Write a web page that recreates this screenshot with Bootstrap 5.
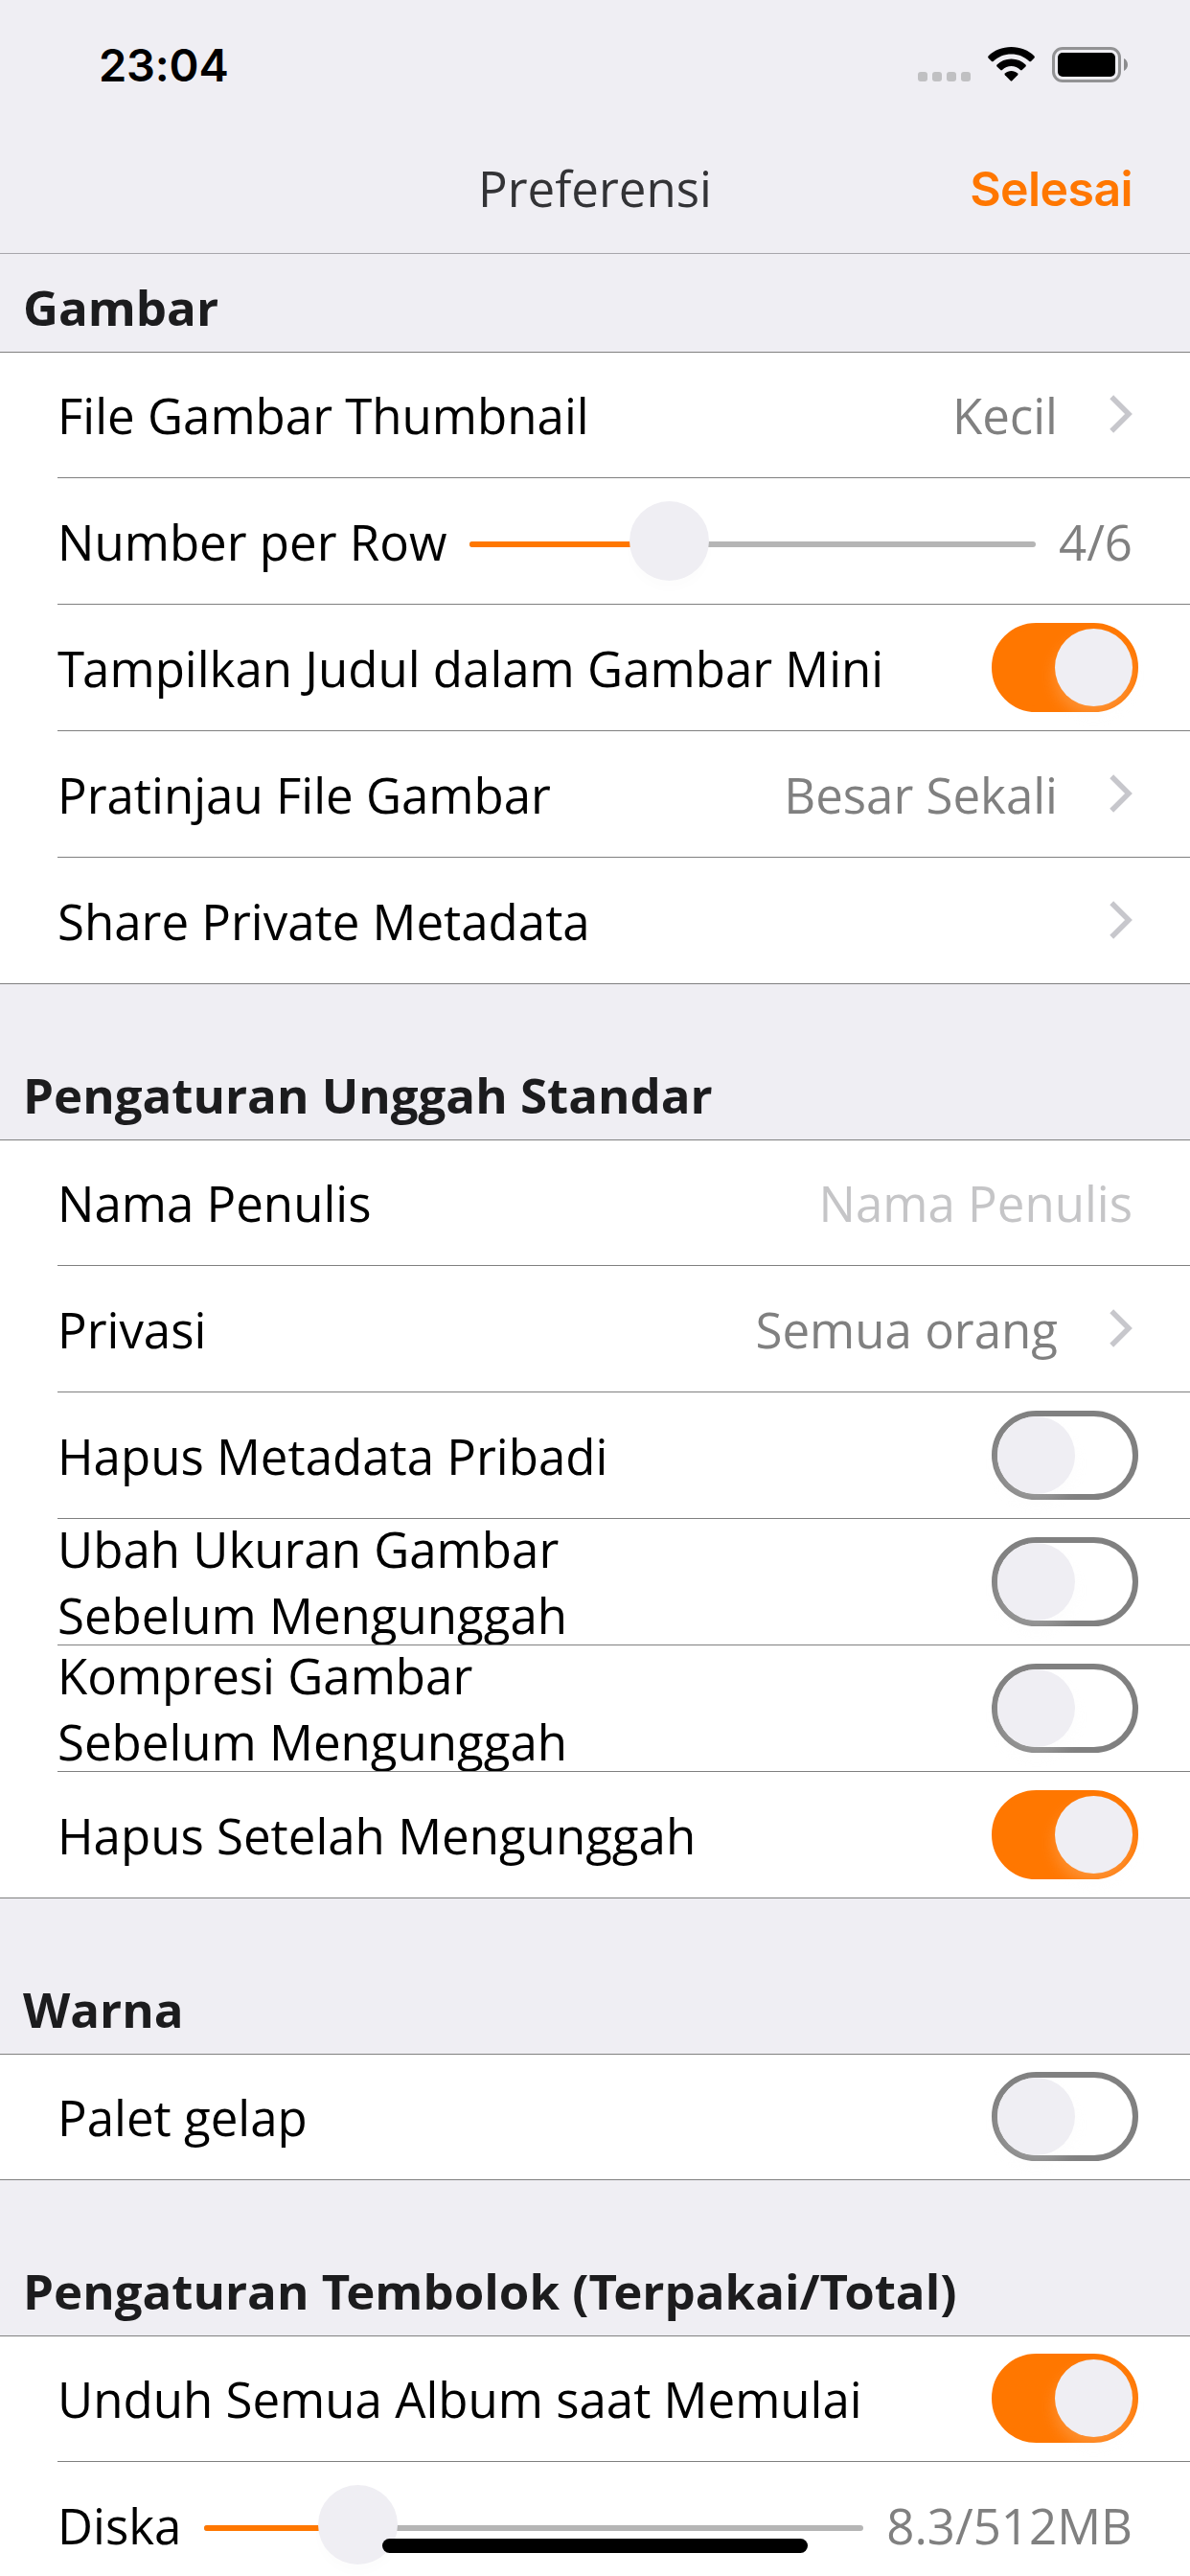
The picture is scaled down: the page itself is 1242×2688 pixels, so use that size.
<!DOCTYPE html>
<html lang="id">
<head>
<meta charset="utf-8">
<meta name="viewport" content="width=device-width, initial-scale=1">
<title>Preferensi</title>
<link href="https://cdn.jsdelivr.net/npm/bootstrap@5.3.0/dist/css/bootstrap.min.css" rel="stylesheet">
<style>
:root{--accent:#ff7700;--panel:#efeef3;--line:#808080}
body{font-family:"Open Sans","Noto Sans",sans-serif;font-size:51px;line-height:69px;color:#000;background:var(--panel)}
.screen{width:1242px;height:2688px;background:var(--panel)}
.ios{font-family:Inter,sans-serif;font-weight:600}
.status{height:132px;padding:0 65px 0 103px}
.clock{font-size:47px;line-height:60px;letter-spacing:-.2px;margin-top:38px}
.status-icons{margin-top:49px}
.top-nav{height:133px;border-bottom:1px solid #a7a6ab;padding:0 60px}
.top-nav>div{height:128px}
.nav-title{color:#333336}
.done{color:var(--accent);font-size:50px;letter-spacing:-.6px}
.section-head{height:164px;padding:0 24px 12px;border-top:1px solid var(--line);border-bottom:1px solid var(--line);color:#1c1c1e;background:var(--panel);font-size:51px;line-height:69px}
.section-head.first-head{height:103px;border-top:0}
.kern{letter-spacing:-4px}
.kern-sm{letter-spacing:-2px}
.rows{background:#fff}
.item{height:132px;margin-left:60px;padding:1px 60px 0 0;border-top:1px solid var(--line)}
.item:first-child{height:130px;border-top:0;padding-top:0}
.item.has-switch{padding-right:54px}
.value{color:#808080}
.hint{color:#c5c5c7}
.chev{margin-left:54px;margin-bottom:3px}
.switch{width:153px;height:93px;margin-bottom:1px;border:6px solid var(--line);border-radius:47px;flex:none}
.switch i{display:block;width:81px;height:81px;border-radius:50%;background:var(--panel);box-shadow:0 9px 16px rgba(245,245,245,.22)}
.switch.on{background:var(--accent);border-color:var(--accent)}
.switch.on i{margin-left:60px}
.slider{height:6px;border-radius:3px;background:#b5b5b5;position:relative;top:3px}
.slider-fill{height:6px;border-radius:3px;background:var(--accent)}
.slider-knob{position:absolute;top:-42px;width:83px;height:83px;border-radius:50%;background:var(--panel);box-shadow:0 9px 12px rgba(0,0,0,.012)}
.home-bar{left:399px;top:2649px;width:444px;height:15px;border-radius:8px;background:#000}
</style>
</head>
<body>
<main class="screen position-relative overflow-hidden d-flex flex-column">
  <div class="status d-flex justify-content-between align-items-start flex-shrink-0">
    <div class="clock ios text-black">23:04</div>
    <svg class="status-icons" width="219" height="37" viewBox="0 0 219 37">
      <g fill="#c0c0c2"><rect x="0" y="26" width="10" height="10" rx="3"/><rect x="15" y="26" width="10" height="10" rx="3"/><rect x="30" y="26" width="10" height="10" rx="3"/><rect x="45" y="26" width="10" height="10" rx="3"/></g>
      <g><path d="M97.500 0C107 0 115.500 3.500 121.500 9.500Q122.300 10.500 121.500 11.400L118 15Q117.200 15.700 116.300 14.900C111 10 104.500 7.500 97.500 7.500S84 10 78.700 14.900Q77.800 15.700 77 15L73.500 11.400Q72.700 10.500 73.500 9.500C79.500 3.500 88 0 97.500 0Z"/><path d="M97.500 12.500C103.500 12.500 108.500 14.800 112.500 18.600Q113.300 19.500 112.500 20.400L108.700 24.100Q108 24.800 107 24C104.300 21.500 101 20.100 97.500 20.100S90.700 21.500 88 24Q87 24.800 86.300 24.100L82.500 20.400Q81.700 19.500 82.500 18.600C86.500 14.800 91.500 12.500 97.500 12.500Z"/><path d="M97.500 25C100 25 102.300 25.900 104.100 27.400Q105 28.300 104.200 29.200L98.300 35.300Q97.500 36.100 96.700 35.300L90.800 29.200Q90 28.300 90.900 27.400C92.700 25.900 95 25 97.500 25Z"/></g>
      <rect x="141.500" y="1.500" width="69" height="34" rx="9.500" fill="none" stroke="#929294" stroke-width="3"/>
      <rect x="146" y="6" width="60" height="25" rx="5"/>
      <path d="M215 12C220.300 14.300 220.300 22.700 215 25Z" fill="#8c8c8e"/>
    </svg>
  </div>
  <header class="top-nav flex-shrink-0">
    <div class="row g-0 align-items-center">
      <div class="col"></div>
      <div class="col-auto nav-title">Preferensi</div>
      <div class="col text-end"><span class="done ios">Selesai</span></div>
    </div>
  </header>

  <h2 class="section-head first-head m-0 fw-bold d-flex align-items-end flex-shrink-0">Gambar</h2>
  <div class="rows d-flex flex-column flex-shrink-0">
    <div class="item d-flex align-items-center"><span class="me-auto">File Gambar Thumbnail</span><span class="value">Kecil</span>
      <svg class="chev" width="24" height="40" viewBox="0 0 24 40" fill="none" stroke="#c7c7cc" stroke-width="5.500"><path d="M2.200 2.200L20 20L2.200 37.800"/></svg></div>
    <div class="item d-flex align-items-center"><span class="text-nowrap">Number per Row</span>
      <div class="slider flex-grow-1 mx-4"><div class="slider-fill" style="width:36%"></div><div class="slider-knob" style="left:167px"></div></div><span class="value">4/6</span></div>
    <div class="item has-switch d-flex align-items-center"><span class="me-auto"><span class="kern-sm">T</span>ampilkan Judul dalam Gambar Mini</span><span class="switch on"><i></i></span></div>
    <div class="item d-flex align-items-center"><span class="me-auto">Pratinjau File Gambar</span><span class="value">Besar Sekali</span>
      <svg class="chev" width="24" height="40" viewBox="0 0 24 40" fill="none" stroke="#c7c7cc" stroke-width="5.500"><path d="M2.200 2.200L20 20L2.200 37.800"/></svg></div>
    <div class="item d-flex align-items-center"><span class="me-auto">Share Private Metadata</span>
      <svg class="chev" width="24" height="40" viewBox="0 0 24 40" fill="none" stroke="#c7c7cc" stroke-width="5.500"><path d="M2.200 2.200L20 20L2.200 37.800"/></svg></div>
  </div>

  <h2 class="section-head m-0 fw-bold d-flex align-items-end flex-shrink-0">Pengaturan Unggah Standar</h2>
  <div class="rows d-flex flex-column flex-shrink-0">
    <div class="item d-flex align-items-center"><span class="me-auto">Nama Penulis</span><span class="hint">Nama Penulis</span></div>
    <div class="item d-flex align-items-center"><span class="me-auto">Privasi</span><span class="value">Semua orang</span>
      <svg class="chev" width="24" height="40" viewBox="0 0 24 40" fill="none" stroke="#c7c7cc" stroke-width="5.500"><path d="M2.200 2.200L20 20L2.200 37.800"/></svg></div>
    <div class="item has-switch d-flex align-items-center"><span class="me-auto">Hapus Metadata Pribadi</span><span class="switch"><i></i></span></div>
    <div class="item has-switch d-flex align-items-center"><span class="me-auto">Ubah Ukuran Gambar<br>Sebelum Mengunggah</span><span class="switch"><i></i></span></div>
    <div class="item has-switch d-flex align-items-center"><span class="me-auto">Kompresi Gambar<br>Sebelum Mengunggah</span><span class="switch"><i></i></span></div>
    <div class="item has-switch d-flex align-items-center"><span class="me-auto">Hapus Setelah Mengunggah</span><span class="switch on"><i></i></span></div>
  </div>

  <h2 class="section-head m-0 fw-bold d-flex align-items-end flex-shrink-0">Warna</h2>
  <div class="rows d-flex flex-column flex-shrink-0">
    <div class="item has-switch d-flex align-items-center"><span class="me-auto">Palet gelap</span><span class="switch"><i></i></span></div>
  </div>

  <h2 class="section-head m-0 fw-bold d-flex align-items-end flex-shrink-0"><span>Pengaturan <span class="kern">T</span>embolok (<span class="kern">T</span>erpakai/<span class="kern">T</span>otal)</span></h2>
  <div class="rows d-flex flex-column flex-shrink-0">
    <div class="item has-switch d-flex align-items-center"><span class="me-auto">Unduh Semua Album saat Memulai</span><span class="switch on"><i></i></span></div>
    <div class="item d-flex align-items-center"><span>Diska</span>
      <div class="slider flex-grow-1 mx-4"><div class="slider-fill" style="width:24%"></div><div class="slider-knob" style="left:119px"></div></div><span class="value">8.3/512MB</span></div>
  </div>
  <div class="home-bar position-absolute"></div>
</main>
<script src="https://cdn.jsdelivr.net/npm/bootstrap@5.3.0/dist/js/bootstrap.bundle.min.js"></script>
</body>
</html>
